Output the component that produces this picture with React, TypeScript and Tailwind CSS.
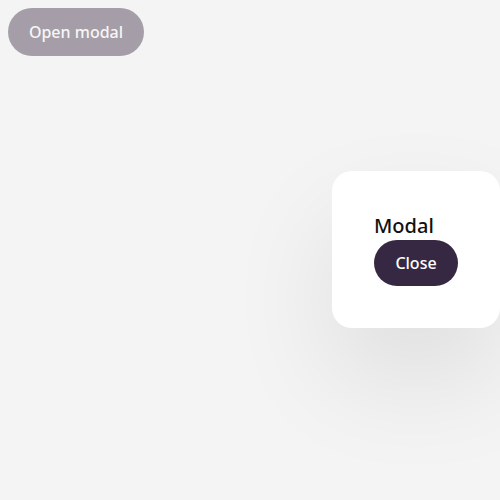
import { useState } from "react";

export default function App() {
  const [open, setOpen] = useState(true);

  return (
    <div
      className="relative h-[500px] w-[500px] overflow-hidden bg-[#f4f4f4] p-2"
      style={{ fontFamily: '"Noto Sans", "Open Sans", sans-serif' }}
    >
      <button
        onClick={() => setOpen(true)}
        className="h-12 w-[136px] rounded-full bg-[#a59ea9] text-[16px] font-medium text-[#f6f6f6]"
      >
        Open modal
      </button>

      {open && (
        <div className="absolute left-[332px] top-[171px] flex h-[157px] w-[168px] flex-col items-start rounded-[20px] bg-white px-[42px] pt-[41px] shadow-[0_50px_110px_rgba(0,0,0,0.09)]">
          <h2 className="text-[20px] font-medium leading-[28px] text-[#111]">
            Modal
          </h2>
          <button
            onClick={() => setOpen(false)}
            className="h-[46px] w-[84px] rounded-full bg-[#362843] text-[16px] font-medium text-white"
          >
            Close
          </button>
        </div>
      )}
    </div>
  );
}
